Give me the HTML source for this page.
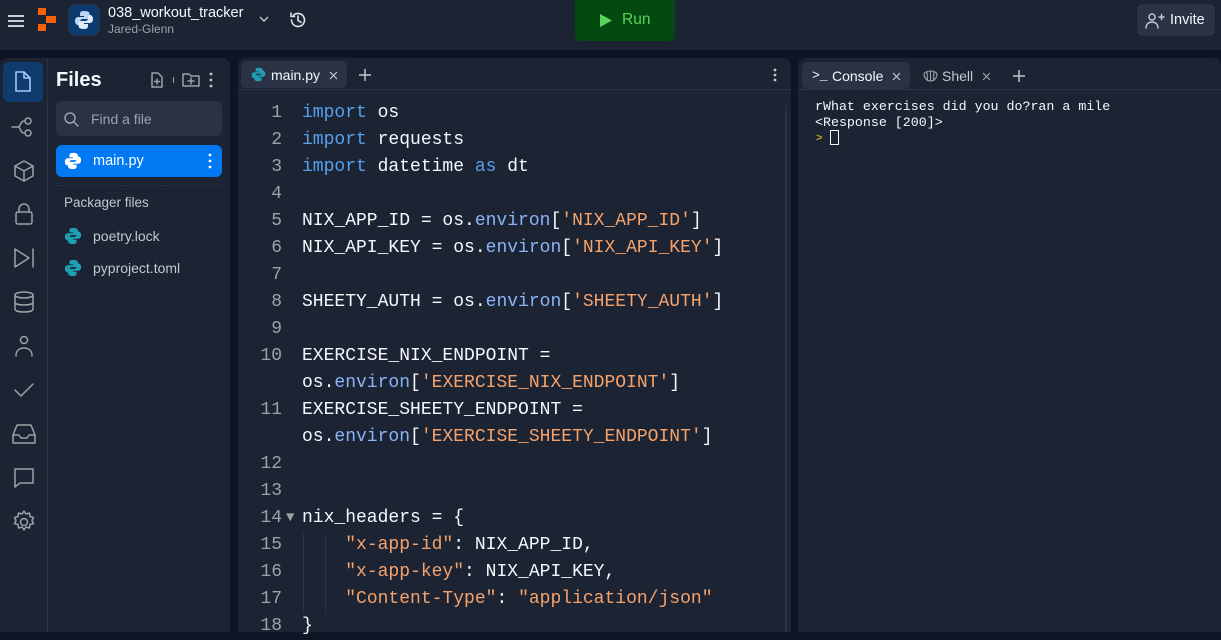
<!DOCTYPE html>
<html><head><meta charset="utf-8">
<style>
*{margin:0;padding:0;box-sizing:border-box}
body{width:1221px;height:632px;overflow:hidden;background:#0e1525;font-family:"Liberation Sans",sans-serif;color:#f5f9fc;position:relative}
.abs{position:absolute}
.top{left:0;top:0;width:1221px;height:50px;background:#1c2333}
.panel{background:#1c2333;border-radius:8px 8px 0 0}
.mono{font-family:"Liberation Mono","DejaVu Sans Mono",monospace}
.code{left:0;top:100px;font-size:18px;line-height:27px}
.ln{position:absolute;width:282px;text-align:right;color:#9da2a6;left:0}
.cl{position:absolute;left:302px;white-space:pre;color:#f5f9fc}
.k{color:#56a0ec}.s{color:#f5a36b}.f{color:#8ab4f8}
svg{display:block}
.ic{stroke:#9da2a6;fill:none;stroke-width:1.5;stroke-linecap:round;stroke-linejoin:round}
</style></head><body>
<div class="abs top"></div>
<svg class="abs" style="left:6px;top:12px" width="20" height="18"><path d="M2 4h16M2 9h16M2 14h16" stroke="#e0e4ea" stroke-width="1.8"/></svg>
<svg class="abs" style="left:38px;top:8px" width="22" height="24"><rect x="0" y="0" width="8" height="7" fill="#f26207"/><rect x="8" y="8" width="10" height="7" fill="#f26207"/><rect x="0" y="16" width="8" height="7" fill="#f26207"/></svg>
<div class="abs" style="left:68px;top:4px;width:32px;height:32px;border-radius:7px;background:#0b3a6e;border:1px solid #2b3245"></div>
<svg class="abs" style="left:74px;top:10px" width="20" height="20"><path d="M10 1c-4 0-4 2-4 3v2h4v1H4c-2 0-3 2-3 4s1 4 3 4h2v-3c0-2 1-3 3-3h4c1.5 0 2.5-1 2.5-2.5V4c0-2-2-3-5.5-3z" fill="#bcd6f5"/><path d="M10 19c4 0 4-2 4-3v-2h-4v-1h6c2 0 3-2 3-4s-1-4-3-4h-2v3c0 2-1 3-3 3H7c-1.5 0-2.5 1-2.5 2.5V16c0 2 2 3 5.5 3z" fill="#dfe9f7"/></svg>
<div class="abs" style="left:108px;top:5px;font-size:14.5px;color:#f5f9fc">038_workout_tracker</div>
<div class="abs" style="left:108px;top:22px;font-size:12px;color:#9da2a6">Jared-Glenn</div>
<svg class="abs" style="left:258px;top:14px" width="12" height="10"><path d="M2 3l4 4 4-4" stroke="#c2c8cc" fill="none" stroke-width="1.4"/></svg>
<svg class="abs" style="left:288px;top:10px" width="20" height="20"><path d="M3.5 10a6.5 6.5 0 1 0 2-4.7M3 3v3.5h3.5M10 6v4.5l3 1.8" stroke="#e0e4ea" fill="none" stroke-width="1.6" stroke-linecap="round"/></svg>
<div class="abs" style="left:575px;top:0;width:100px;height:41px;background:#044a10;border-radius:0 0 6px 6px"></div>
<svg class="abs" style="left:599px;top:13px" width="14" height="15"><path d="M1 1l12 6.5L1 14z" fill="#5bd35b"/></svg>
<div class="abs" style="left:622px;top:11px;font-size:15.5px;color:#5bd35b">Run</div>
<div class="abs" style="left:1137px;top:4px;width:78px;height:32px;background:#2b3245;border-radius:6px"></div>
<svg class="abs" style="left:1145px;top:12px" width="20" height="18"><circle cx="7" cy="5" r="3" class="ic" style="stroke:#c2c8cc"/><path d="M1 16c0-4 3-6 6-6s6 2 6 6M14 5h5M16.5 2.5v5" class="ic" style="stroke:#c2c8cc"/></svg>
<div class="abs" style="left:1170px;top:12px;font-size:14.5px;color:#f5f9fc">Invite</div>

<div class="abs panel" style="left:0;top:58px;width:230px;height:574px"></div>
<div class="abs" style="left:47px;top:58px;width:1px;height:574px;background:#2b3245"></div>
<div class="abs" style="left:3px;top:62px;width:40px;height:40px;background:#0f3b6e;border-radius:6px"></div>
<svg class="abs" style="left:12px;top:70px" width="22" height="24"><path d="M4 2h8l6 6v13H4z M12 2v6h6" fill="none" stroke="#a6c9f5" stroke-width="1.6" stroke-linejoin="round"/></svg>
<svg class="abs" style="left:11px;top:114px" width="26" height="24"><path d="M1 13h6M7 13c3 0 2-6 6-6M7 13c3 0 2 6 6 6" class="ic"/><circle cx="17" cy="7" r="3" class="ic"/><circle cx="17" cy="19" r="3" class="ic"/></svg>
<svg class="abs" style="left:12px;top:159px" width="24" height="24"><path d="M12 2l9 5v10l-9 5-9-5V7z M3 7l9 5 9-5M12 12v10" class="ic"/></svg>
<svg class="abs" style="left:13px;top:202px" width="22" height="24"><rect x="3" y="10" width="16" height="12" rx="2" class="ic"/><path d="M6 10V7a5 5 0 0 1 10 0v3" class="ic"/></svg>
<svg class="abs" style="left:12px;top:246px" width="24" height="24"><path d="M3 3l14 9-14 9z M21 3v18" class="ic"/></svg>
<svg class="abs" style="left:12px;top:290px" width="24" height="24"><ellipse cx="12" cy="5" rx="9" ry="3" class="ic"/><path d="M3 5v14c0 2 4 3 9 3s9-1 9-3V5M3 12c0 2 4 3 9 3s9-1 9-3" class="ic"/></svg>
<svg class="abs" style="left:12px;top:334px" width="24" height="24"><circle cx="12" cy="6" r="3.5" class="ic"/><path d="M4 22c0-6 4-8 8-8s8 2 8 8" class="ic"/></svg>
<svg class="abs" style="left:12px;top:378px" width="24" height="24"><path d="M3 12l6 6L21 6" class="ic"/></svg>
<svg class="abs" style="left:11px;top:422px" width="26" height="24"><path d="M2 13l4-10h14l4 10v8H2z M2 13h6l2 3h6l2-3h6" class="ic"/></svg>
<svg class="abs" style="left:12px;top:466px" width="24" height="24"><path d="M3 3h18v14H8l-5 4z" class="ic"/></svg>
<svg class="abs" style="left:11px;top:509px" width="26" height="26"><circle cx="13" cy="13" r="3.5" class="ic"/><path d="M13 2l2 3 3.5-1 .5 3.5 3.5 1-1.5 3 1.5 3-3.5 1-.5 3.5-3.5-1-2 3-2-3-3.5 1-.5-3.5-3.5-1 1.5-3-1.5-3 3.5-1 .5-3.5 3.5 1z" class="ic"/></svg>

<div class="abs" style="left:56px;top:69px;font-size:20px;font-weight:bold;color:#f5f9fc">Files</div>
<svg class="abs" style="left:150px;top:72px" width="14" height="16"><path d="M2 1h6l4 4v10H2z" class="ic"/><path d="M7 7v5M4.5 9.5h5" class="ic" stroke-width="1.2"/></svg>
<div class="abs" style="left:173px;top:77px;width:1px;height:6px;background:#9da2a6"></div>
<svg class="abs" style="left:182px;top:72px" width="18" height="16"><path d="M1 2h6l2 2h8v10H1z" class="ic"/><path d="M9 6v6M6 9h6" class="ic" stroke-width="1.2"/></svg>
<svg class="abs" style="left:208px;top:72px" width="6" height="16"><circle cx="3" cy="2" r="1.4" fill="#c2c8cc"/><circle cx="3" cy="8" r="1.4" fill="#c2c8cc"/><circle cx="3" cy="14" r="1.4" fill="#c2c8cc"/></svg>
<div class="abs" style="left:56px;top:101px;width:166px;height:35px;background:#2b3245;border-radius:6px"></div>
<svg class="abs" style="left:63px;top:111px" width="16" height="16"><circle cx="7" cy="7" r="5" class="ic"/><path d="M11 11l4 4" class="ic"/></svg>
<div class="abs" style="left:91px;top:111px;font-size:14px;color:#9da2a6">Find a file</div>
<div class="abs" style="left:56px;top:145px;width:166px;height:32px;background:#0079f2;border-radius:6px"></div>
<svg class="abs" style="left:64px;top:152px" width="18" height="18" viewBox="0 0 20 20"><path d="M10 1c-4 0-4 2-4 3v2h4v1H4c-2 0-3 2-3 4s1 4 3 4h2v-3c0-2 1-3 3-3h4c1.5 0 2.5-1 2.5-2.5V4c0-2-2-3-5.5-3z" fill="#fff"/><path d="M10 19c4 0 4-2 4-3v-2h-4v-1h6c2 0 3-2 3-4s-1-4-3-4h-2v3c0 2-1 3-3 3H7c-1.5 0-2.5 1-2.5 2.5V16c0 2 2 3 5.5 3z" fill="#fff"/></svg>
<div class="abs" style="left:93px;top:153px;font-size:14.5px;color:#fff">main.py</div>
<svg class="abs" style="left:207px;top:153px" width="6" height="16"><circle cx="3" cy="2" r="1.4" fill="#fff"/><circle cx="3" cy="8" r="1.4" fill="#fff"/><circle cx="3" cy="14" r="1.4" fill="#fff"/></svg>
<div class="abs" style="left:56px;top:185px;width:166px;border-top:1px dashed #2b3245"></div>
<div class="abs" style="left:64px;top:195px;font-size:13.5px;color:#c2c8cc">Packager files</div>
<svg class="abs" style="left:64px;top:227px" width="18" height="18" viewBox="0 0 20 20"><path d="M10 1c-4 0-4 2-4 3v2h4v1H4c-2 0-3 2-3 4s1 4 3 4h2v-3c0-2 1-3 3-3h4c1.5 0 2.5-1 2.5-2.5V4c0-2-2-3-5.5-3z" fill="#1f9fb5"/><path d="M10 19c4 0 4-2 4-3v-2h-4v-1h6c2 0 3-2 3-4s-1-4-3-4h-2v3c0 2-1 3-3 3H7c-1.5 0-2.5 1-2.5 2.5V16c0 2 2 3 5.5 3z" fill="#1f9fb5"/></svg>
<div class="abs" style="left:93px;top:228px;font-size:14px;color:#c2c8cc">poetry.lock</div>
<svg class="abs" style="left:64px;top:259px" width="18" height="18" viewBox="0 0 20 20"><path d="M10 1c-4 0-4 2-4 3v2h4v1H4c-2 0-3 2-3 4s1 4 3 4h2v-3c0-2 1-3 3-3h4c1.5 0 2.5-1 2.5-2.5V4c0-2-2-3-5.5-3z" fill="#1f9fb5"/><path d="M10 19c4 0 4-2 4-3v-2h-4v-1h6c2 0 3-2 3-4s-1-4-3-4h-2v3c0 2-1 3-3 3H7c-1.5 0-2.5 1-2.5 2.5V16c0 2 2 3 5.5 3z" fill="#1f9fb5"/></svg>
<div class="abs" style="left:93px;top:260px;font-size:14px;color:#c2c8cc">pyproject.toml</div>

<div class="abs panel" style="left:238px;top:58px;width:553px;height:574px"></div>
<div class="abs" style="left:238px;top:89px;width:553px;height:1px;background:#2b3245"></div>
<div class="abs" style="left:241px;top:61px;width:106px;height:27px;background:#2b3245;border-radius:6px"></div>
<svg class="abs" style="left:251px;top:67px" width="15" height="15" viewBox="0 0 20 20"><path d="M10 1c-4 0-4 2-4 3v2h4v1H4c-2 0-3 2-3 4s1 4 3 4h2v-3c0-2 1-3 3-3h4c1.5 0 2.5-1 2.5-2.5V4c0-2-2-3-5.5-3z" fill="#1f9fb5"/><path d="M10 19c4 0 4-2 4-3v-2h-4v-1h6c2 0 3-2 3-4s-1-4-3-4h-2v3c0 2-1 3-3 3H7c-1.5 0-2.5 1-2.5 2.5V16c0 2 2 3 5.5 3z" fill="#1f9fb5"/></svg>
<div class="abs" style="left:271px;top:67px;font-size:14px;color:#f5f9fc">main.py</div>
<svg class="abs" style="left:329px;top:71px" width="9" height="9"><path d="M1 1l7 7M8 1L1 8" stroke="#c2c8cc" stroke-width="1.2"/></svg>
<svg class="abs" style="left:358px;top:68px" width="14" height="14"><path d="M7 1v12M1 7h12" stroke="#c2c8cc" stroke-width="1.5"/></svg>
<svg class="abs" style="left:772px;top:68px" width="6" height="16"><circle cx="3" cy="2" r="1.4" fill="#c2c8cc"/><circle cx="3" cy="7" r="1.4" fill="#c2c8cc"/><circle cx="3" cy="12" r="1.4" fill="#c2c8cc"/></svg>
<div class="abs" style="left:785px;top:105px;width:2px;height:527px;background:#2b3245"></div>
<div class="abs" style="left:303px;top:533px;width:1px;height:80px;background:#2b3245"></div>
<div class="abs" style="left:325px;top:533px;width:1px;height:80px;background:#2b3245"></div>

<div class="abs code mono" style="width:790px;height:540px">
<div class="ln" style="top:0">1</div><div class="cl" style="top:0"><span class="k">import</span> os</div>
<div class="ln" style="top:27px">2</div><div class="cl" style="top:27px"><span class="k">import</span> requests</div>
<div class="ln" style="top:54px">3</div><div class="cl" style="top:54px"><span class="k">import</span> datetime <span class="k">as</span> dt</div>
<div class="ln" style="top:81px">4</div>
<div class="ln" style="top:108px">5</div><div class="cl" style="top:108px">NIX_APP_ID = os.<span class="f">environ</span>[<span class="s">'NIX_APP_ID'</span>]</div>
<div class="ln" style="top:135px">6</div><div class="cl" style="top:135px">NIX_API_KEY = os.<span class="f">environ</span>[<span class="s">'NIX_API_KEY'</span>]</div>
<div class="ln" style="top:162px">7</div>
<div class="ln" style="top:189px">8</div><div class="cl" style="top:189px">SHEETY_AUTH = os.<span class="f">environ</span>[<span class="s">'SHEETY_AUTH'</span>]</div>
<div class="ln" style="top:216px">9</div>
<div class="ln" style="top:243px">10</div><div class="cl" style="top:243px">EXERCISE_NIX_ENDPOINT =</div>
<div class="cl" style="top:270px">os.<span class="f">environ</span>[<span class="s">'EXERCISE_NIX_ENDPOINT'</span>]</div>
<div class="ln" style="top:297px">11</div><div class="cl" style="top:297px">EXERCISE_SHEETY_ENDPOINT =</div>
<div class="cl" style="top:324px">os.<span class="f">environ</span>[<span class="s">'EXERCISE_SHEETY_ENDPOINT'</span>]</div>
<div class="ln" style="top:351px">12</div>
<div class="ln" style="top:378px">13</div>
<div class="ln" style="top:405px">14</div><div class="abs" style="left:286px;top:405px;font-size:14px;color:#9da2a6">▼</div><div class="cl" style="top:405px">nix_headers = {</div>
<div class="ln" style="top:432px">15</div><div class="cl" style="top:432px">    <span class="s">"x-app-id"</span>: NIX_APP_ID,</div>
<div class="ln" style="top:459px">16</div><div class="cl" style="top:459px">    <span class="s">"x-app-key"</span>: NIX_API_KEY,</div>
<div class="ln" style="top:486px">17</div><div class="cl" style="top:486px">    <span class="s">"Content-Type"</span>: <span class="s">"application/json"</span></div>
<div class="ln" style="top:513px">18</div><div class="cl" style="top:513px">}</div>
</div>

<div class="abs panel" style="left:798px;top:58px;width:423px;height:574px"></div>
<div class="abs" style="left:798px;top:89px;width:423px;height:1px;background:#2b3245"></div>
<div class="abs" style="left:802px;top:62px;width:108px;height:27px;background:#2b3245;border-radius:6px"></div>
<div class="abs mono" style="left:812px;top:68px;font-size:13px;color:#f5f9fc">&gt;_</div>
<div class="abs" style="left:832px;top:68px;font-size:14px;color:#f5f9fc">Console</div>
<svg class="abs" style="left:892px;top:72px" width="9" height="9"><path d="M1 1l7 7M8 1L1 8" stroke="#c2c8cc" stroke-width="1.2"/></svg>
<svg class="abs" style="left:923px;top:68px" width="15" height="14"><path d="M7.5 13C3 13 1 9 1 6c2-4 11-4 13 0 0 3-2 7-6.5 7zM7.5 13V3M4.5 12L4 4M10.5 12l.5-8" stroke="#9da2a6" fill="none" stroke-width="1.1"/></svg>
<div class="abs" style="left:942px;top:68px;font-size:14px;color:#c2c8cc">Shell</div>
<svg class="abs" style="left:982px;top:72px" width="9" height="9"><path d="M1 1l7 7M8 1L1 8" stroke="#9da2a6" stroke-width="1.2"/></svg>
<svg class="abs" style="left:1012px;top:69px" width="14" height="14"><path d="M7 1v12M1 7h12" stroke="#c2c8cc" stroke-width="1.5"/></svg>
<div class="abs mono" style="left:815px;top:99px;font-size:13.3px;line-height:16px;color:#f5f9fc;white-space:pre">rWhat exercises did you do?ran a mile
&lt;Response [200]&gt;</div>
<div class="abs" style="left:816px;top:132px;font-size:11px;font-weight:bold;color:#b5a520">&gt;</div>
<div class="abs" style="left:830px;top:130px;width:9px;height:15px;border:1px solid #f5f9fc"></div>
</body></html>
